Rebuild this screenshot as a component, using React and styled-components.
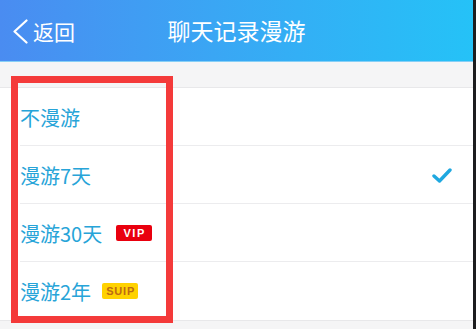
import React from "react";
import styled, { createGlobalStyle } from "styled-components";

const Global = createGlobalStyle`
  html, body { margin: 0; padding: 0; background: #f5f5f6; }
  body { font-family: "Noto Sans CJK SC", "Noto Sans", sans-serif; }
`;

const Frame = styled.div`
  width: 476px;
  height: 329px;
  display: flex;
  overflow: hidden;
`;

const Screen = styled.div`
  position: relative;
  width: 473px;
  display: flex;
  flex-direction: column;
  background: #f5f5f6;
`;

const Edge = styled.div`
  width: 3px;
  background: #1d1d1f;
`;

const Header = styled.header`
  height: 61px;
  flex: none;
  display: grid;
  grid-template-columns: 1fr auto 1fr;
  align-items: center;
  background: linear-gradient(90deg, #4a8cf1 0%, #3aa6f4 45%, #25c2f7 100%);
  border-bottom: 1px solid #86cff6;
  color: #fff;
`;

const Back = styled.div`
  display: flex;
  align-items: center;
  gap: 4px;
  padding-left: 12px;
  font-size: 21px;
  line-height: 1;
  margin-top: 1px;
`;

const Title = styled.h1`
  margin: 0;
  font-size: 23px;
  font-weight: 400;
  line-height: 1;
`;

const Gap = styled.div`
  height: 25px;
  flex: none;
`;

const List = styled.ul`
  margin: 0;
  padding: 0;
  list-style: none;
  background: #fff;
  border-top: 1px solid #e8e8ea;
  border-bottom: 1px solid #e8e8ea;
`;

const Row = styled.li`
  position: relative;
  height: 58px;
  display: flex;
  align-items: center;
  padding: 0 21px 0 20px;
  color: #27a4d8;
  font-size: 20px;
  &:not(:last-child)::after {
    content: "";
    position: absolute;
    left: 20px;
    right: 0;
    bottom: 0;
    height: 1px;
    background: #ececee;
  }
`;

const Label = styled.span`
  flex: 1;
  display: flex;
  align-items: center;
`;

const Badge = styled.span`
  margin-left: ${(p) => (p.$tone === "svip" ? "11px" : "14px")};
  width: 36px;
  height: 16px;
  border-radius: 2px;
  display: inline-flex;
  align-items: center;
  justify-content: center;
  padding-left: 1px;
  box-sizing: border-box;
  font-family: "Liberation Sans", Arial, sans-serif;
  font-weight: 700;
  font-size: 11px;
  letter-spacing: ${(p) => (p.$tone === "svip" ? "0.8px" : "1.6px")};
  background: ${(p) => (p.$tone === "svip" ? "#ffd200" : "#e9000e")};
  color: ${(p) => (p.$tone === "svip" ? "#bd6a14" : "#fff")};
`;

const Highlight = styled.div`
  position: absolute;
  left: 11px;
  top: 76px;
  width: 162px;
  height: 247px;
  box-sizing: border-box;
  border: 7px solid #f43a3a;
  pointer-events: none;
`;

const items = [
  { label: "不漫游" },
  { label: "漫游7天", checked: true },
  { label: "漫游30天", badge: "VIP", tone: "vip" },
  { label: "漫游2年", badge: "SUIP", tone: "svip" },
];

export default function App() {
  return (
    <>
      <Global />
      <Frame>
        <Screen>
          <Header>
            <Back>
              <svg width="17" height="25" viewBox="0 0 17 25">
                <path d="M14.5 1.5 L2.5 12.5 L14.5 23.5" fill="none" stroke="#fff" strokeWidth="2.2" strokeLinecap="round" strokeLinejoin="round" />
              </svg>
              <span>返回</span>
            </Back>
            <Title>聊天记录漫游</Title>
            <div />
          </Header>
          <Gap />
          <List>
            {items.map((it) => (
              <Row key={it.label}>
                <Label>
                  {it.label}
                  {it.badge && <Badge $tone={it.tone}>{it.badge}</Badge>}
                </Label>
                {it.checked && (
                  <svg width="20" height="15" viewBox="0 0 20 15">
                    <path d="M2 8 L7.5 13 L18 2" fill="none" stroke="#1fa8e0" strokeWidth="3.4" strokeLinecap="round" strokeLinejoin="round" />
                  </svg>
                )}
              </Row>
            ))}
          </List>
          <Highlight />
        </Screen>
        <Edge />
      </Frame>
    </>
  );
}
